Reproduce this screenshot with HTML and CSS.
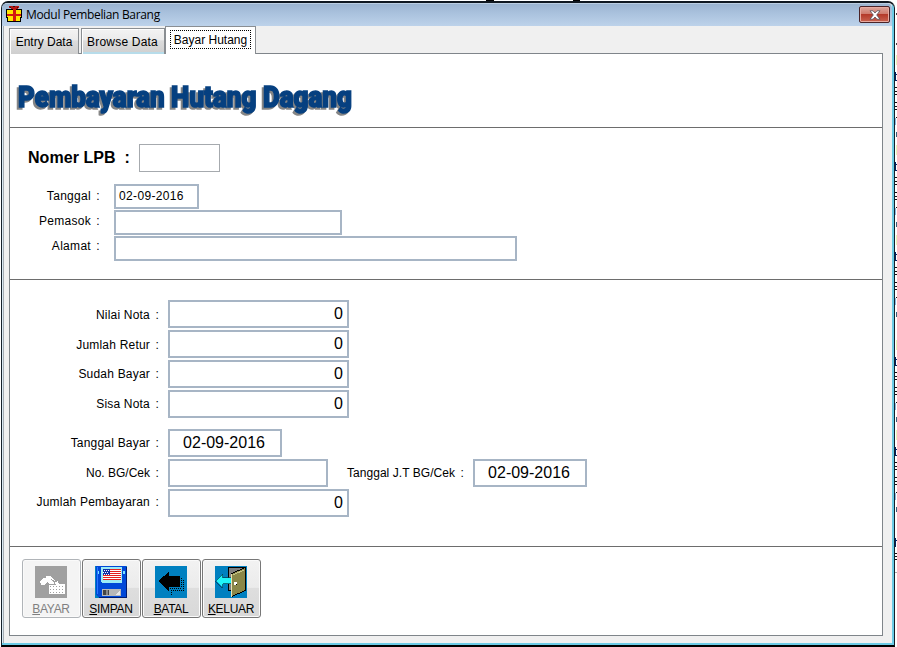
FILE: index.html
```html
<!DOCTYPE html>
<html lang="id">
<head>
<meta charset="utf-8">
<title>Modul Pembelian Barang</title>
<link rel="stylesheet" href="styles.css">
</head>
<body>
<div class="desktop">
  <svg class="behind" width="897" height="647" aria-hidden="true" shape-rendering="crispEdges">
    <defs>
      <g id="frag">
        <path d="M895 0h1v9h-1zM896 2h1v1h-1zM896 8h1v1h-1z" fill="#002060"/>
        <path d="M895 15h2v1h-2zM895 19h2v1h-2zM895 22h2v1h-2zM895 30h2v1h-2zM895 34h2v1h-2zM895 37h2v1h-2zM896 45h1v1h-1z" fill="#111"/>
        <path d="M895 46h1v7h-1z" fill="#8cb8dc"/>
        <path d="M896 60h1v5h-1z" fill="#35607a"/>
        <path d="M896 -17h1v10h-1z" fill="#e7f5b8"/>
      </g>
    </defs>
    <path d="M486 0h8v1h-8zM573 0h7v1h-7z" fill="#000"/>
    <path d="M896 13h1v2h-1zM896 43h1v2h-1z" fill="#444"/>
    <use href="#frag" y="72"/><use href="#frag" y="162"/><use href="#frag" y="252"/><use href="#frag" y="357"/><use href="#frag" y="447"/>
    <path d="M895 538h1v9h-1zM896 540h1v1h-1z" fill="#002060"/>
    <path d="M895 553h2v1h-2zM895 556h2v1h-2zM895 559h2v1h-2z" fill="#111"/>
    <path d="M895 572h2v1h-2z" fill="#aaa"/>
  </svg>
  <main class="window">
    <header class="titlebar">
      <svg class="app-icon" width="17" height="17" viewBox="0 0 17 17" shape-rendering="crispEdges">
        <path d="M3 0h10v2l-3 1H6L3 2z" fill="#b41414"/>
        <path d="M4 1h1v1H4zM7 0h2v1H7zM11 1h1v1h-1z" fill="#301010"/>
        <path d="M0 3h16v9h-1v4H1v-4H0z" fill="#000"/>
        <path d="M1 4h14v7H1zM2 11h12v4H2z" fill="#ffe600"/>
        <path d="M7 3h3v12H7zM1 8h14v2H1z" fill="#d21a10"/>
      </svg>
      <span class="caption">Modul Pembelian Barang</span>
      <button class="close" aria-label="Tutup"><svg width="12" height="10" viewBox="0 0 12 10"><path d="M1 .8h3L6 3l2-2.200h3L7.700 5 11 9.200H8L6 7 4 9.200H1L4.300 5z" fill="#fff" stroke="#54505a" stroke-width=".8"/></svg></button>
    </header>
    <nav class="tabs">
      <button class="tab t1"><span>Entry Data</span></button>
      <button class="tab t2"><span>Browse Data</span></button>
      <button class="tab active"><span>Bayar Hutang</span></button>
    </nav>
    <section class="pane">
      <div class="band heading">
        <svg width="345" height="40">
          <text class="big" x="2" y="27" textLength="334" lengthAdjust="spacingAndGlyphs">Pembayaran Hutang Dagang</text>
        </svg>
      </div>
      <div class="band supplier">
        <div class="lpb"><b>Nomer LPB&nbsp; :</b><i class="box plain"></i></div>
        <div class="row r1"><label>Tanggal</label><em>:</em><i class="box date">02-09-2016</i></div>
        <div class="row r1 mid"><label>Pemasok</label><em>:</em><i class="box name"></i></div>
        <div class="row r1 low"><label>Alamat</label><em>:</em><i class="box address"></i></div>
      </div>
      <div class="band payment">
        <div class="row r2 first"><label>Nilai Nota</label><em>:</em><i class="box num">0</i></div>
        <div class="row r2 first"><label>Jumlah Retur</label><em>:</em><i class="box num">0</i></div>
        <div class="row r2"><label>Sudah Bayar</label><em>:</em><i class="box num">0</i></div>
        <div class="row r2"><label>Sisa Nota</label><em>:</em><i class="box num">0</i></div>
        <div class="row r2 gap"><label>Tanggal Bayar</label><em>:</em><i class="box day">02-09-2016</i></div>
        <div class="row r2"><label class="tight">No. BG/Cek</label><em>:</em><i class="box cek"></i><label class="due">Tanggal J.T BG/Cek</label><em>:</em><i class="box day">02-09-2016</i></div>
        <div class="row r2 last"><label>Jumlah Pembayaran</label><em>:</em><i class="box num">0</i></div>
      </div>
      <div class="band actions">
        <button class="act off"><svg width="32" height="32" viewBox="0 0 32 32" shape-rendering="crispEdges">
          <path d="M0 0h32v32H0z" fill="#a0a0a0"/>
          <path d="M5 15l3-3 5-1 6 4v3h-4l-3-2-3 3H6zM10 10h5l3 2 2 3-4-2z" fill="#fff"/>
          <path d="M14 19h8v9h-8zM22 18h8v10h-8zM20 16l3-1 1 4h-3z" fill="#fff"/>
          <path d="M15 20.500h14M15 23.500h14M15 26.500h14" stroke="#a0a0a0" stroke-dasharray="1 2"/>
          <path d="M16 13l4 4" stroke="#a0a0a0"/></svg><span><u>B</u>AYAR</span></button>
        <button class="act"><svg width="32" height="32" viewBox="0 0 32 32" shape-rendering="crispEdges">
          <path d="M0 0h32v32H0z" fill="#0080c0"/>
          <path d="M1 0h30v32H4l-3-3z" fill="#0048d8"/><path d="M2 1h1v27H2z" fill="#2878ff"/><path d="M31 1h1v31H4v-1h27z" fill="#001c70"/>
          <path d="M6 1h21v15l-1 1H7l-1-1z" fill="#9cebf6"/><path d="M8 3h18v11H8z" fill="#fff"/>
          <path d="M8 3h18v1H8zM8 5h18v1H8zM8 7h18v1H8zM8 9h18v1H8zM8 11h18v1H8zM8 13h18v1H8z" fill="#e42020"/>
          <path d="M8 3h7v6H8z" fill="#1430a8"/><path d="M9 4.500h6M8 6.500h6M9 8.500h6" stroke="#fff" stroke-dasharray="1 1"/>
          <path d="M3 5h1v3H3zM28 5h2v3h-2z" fill="#7ce0ff"/>
          <path d="M7 23h19v7H7z" fill="#b8b8b8"/><path d="M8 24h6v5H8z" fill="#444"/><path d="M11 24h2v5h-2z" fill="#888"/><path d="M20 29l5-5v5z" fill="#e8e8e8"/>
          </svg><span><u>S</u>IMPAN</span></button>
        <button class="act"><svg width="32" height="32" viewBox="0 0 32 32" shape-rendering="crispEdges">
          <path d="M0 0h32v32H0z" fill="#0080c0"/><path d="M3 15l11-9v4h11v11H14v4z" fill="#000"/>
          <path d="M26.500 12v10M28.500 14v11M15 22.500h12M16 24.500h13M16.500 24v5" fill="none" stroke="#000" stroke-dasharray="1 1"/></svg><span><u>B</u>ATAL</span></button>
        <button class="act"><svg width="32" height="32" viewBox="0 0 32 32" shape-rendering="crispEdges">
          <path d="M0 0h32v32H0z" fill="#0080c0"/><path d="M13.500 1.500h17v23h-17z" fill="#808080" stroke="#000"/>
          <path d="M16.500 7.500l14-6v23l-14 6z" fill="#8a8748" stroke="#000"/><path d="M18 9l11-5" stroke="#c8c68c"/>
          <path d="M0.500 14.500l7-7v4h9v6h-9v4z" fill="#20f4f8" stroke="#003c50" stroke-width=".7"/>
          <path d="M16.500 7.500v23" stroke="#e6e6b4"/><path d="M19 16h3v3h-3z" fill="#fff"/><path d="M21 18h1v1h-1z" fill="#000"/>
          </svg><span><u>K</u>ELUAR</span></button>
      </div>
    </section>
  </main>
</div>
</body>
</html>
```
FILE: styles.css
```css
* { box-sizing: border-box; }
body { margin: 0; overflow: hidden; background: #fff; font-family: "Liberation Sans", Arial, sans-serif; color: #000; }
button { padding: 0; font: inherit; color: inherit; }
i, em { font-style: normal; }
.desktop { position: relative; width: 897px; height: 647px; padding: 1px 0 0 1px; }
.behind { position: absolute; left: 0; top: 0; }
.window {
  position: relative; width: 894px; height: 646px; padding: 0 7px 0 6px;
  background: #f0f0f0; border: 1px solid #14202a; border-top: 2px solid #101820;
  border-bottom: 2px solid #000; border-radius: 7px 7px 0 0;
  box-shadow: inset -2px -2px 0 #6ccbe6, inset 1px 0 0 #dcebf5, inset 2px 0 0 #a5adb3;
}
.titlebar {
  display: flex; align-items: flex-start; height: 23px; margin: 0 -5px 0 -6px;
  background: linear-gradient(#dce8f3 0, #9bb4d0 1px, #a8c0dc 9px, #bdd2ea 100%);
  border-radius: 5px 5px 0 0;
}
.app-icon { margin: 3px 3px 0 4px; flex: none; }
.caption { flex: 1; padding-top: 4px; font: 12px/16px "Open Sans", "Noto Sans", sans-serif; letter-spacing: -.33px; }
.close {
  display: flex; align-items: center; justify-content: center; width: 31px; height: 17px; margin: 3px 2px 0 0;
  border: 1px solid #4a2428; border-radius: 2px; box-shadow: inset 0 0 0 1px #e8aaa0;
  background: linear-gradient(#dda69c 0, #cf7b6d 45%, #b43a2a 50%, #c96350 100%);
}
.tabs { display: flex; height: 27px; }
.tab {
  height: 26px; margin-top: 2px; border: 1px solid #8a8e92; border-bottom: 0; font-size: 12px;
  background: linear-gradient(#f3f3f3 0, #ebebeb 42%, #dcdcdc 48%, #cfcfcf 100%);
  box-shadow: inset 1px 1px 0 #fff;
}
.t1 { width: 70px; margin-left: 1px; }
.t2 { width: 84px; margin-left: 2px; padding-right: 1px; letter-spacing: .2px; box-shadow: inset 1px 1px 0 #fff, inset 0 -2px 0 #b7dcea; }
.tab.active {
  position: relative; width: 91px; height: 28px; margin-top: 0; background: #fff; box-shadow: none;
  display: flex; align-items: flex-start; padding: 3px 0 0 4px;
}
.active span { width: 81px; height: 19px; border: 1px dotted #000; line-height: 19px; }
.pane { width: 874px; height: 583px; margin-left: 1px; border: 1px solid #7f858a; background: #fff; }
.band { border-bottom: 1px solid #6d6d6d; width: 872px; }
.heading { height: 74px; padding: 26px 0 0 6px; }
.big {
  font: 900 29px Roboto, "Open Sans", sans-serif; fill: #064080; stroke: #064080; stroke-width: 1.5px;
  filter: drop-shadow(-1.500px 2px 0 #858585);
}
.supplier { height: 152px; padding-top: 16px; }
.lpb { display: flex; height: 40px; padding-left: 18px; }
.lpb b { width: 111px; font-size: 16px; line-height: 27px; letter-spacing: .05px; }
.box {
  display: block; height: 28px; border: 2px solid; border-color: #a7b5c5; background: #fff;
  font-size: 16px; line-height: 24px;
}
.plain { width: 81px; border: 1px solid #a6aaae; }
.row { display: flex; font-size: 12px; letter-spacing: .3px; }
.row label { text-align: right; }
.row em { width: 9px; text-align: right; }
.r1 { height: 26px; }
.r1 label { width: 81px; line-height: 24px; }
.r1 em { line-height: 24px; }
.mid label, .mid em { line-height: 22px; }
.low label, .low em { line-height: 20px; }
.r1 .box { height: 25px; margin-left: 14px; font-size: 12px; line-height: 21px; letter-spacing: .35px; }
.r1 .date { width: 85px; padding-left: 3px; }
.r1 .name { width: 228px; }
.r1 .address { width: 403px; }
.payment { height: 267px; padding-top: 20px; }
.r2 { height: 30px; letter-spacing: .2px; }
.r2 label { width: 140px; line-height: 28px; }
.r2 em { line-height: 28px; }
.first label, .first em { line-height: 30px; }
.last label, .last em { line-height: 26px; }
.r2 .tight { letter-spacing: 0; }
.r2 .box { margin-left: 9px; letter-spacing: 0; }
.r2.gap { margin-top: 9px; }
.num { width: 181px; padding-right: 4px; text-align: right; }
.r2 .day { width: 114px; padding-right: 2px; text-align: center; }
.cek { width: 160px; }
.r2 .due { width: 127px; letter-spacing: .05px; }
.actions { display: flex; gap: 1px; height: 88px; padding: 12px 0 0 12px; border: 0; }
.act {
  display: flex; flex-direction: column; align-items: center; width: 59px; height: 59px; padding: 6px 1px 0 0;
  border: 1px solid #777; border-radius: 3px; font-size: 12px; box-shadow: inset 0 0 0 1px #fafafa;
  background: linear-gradient(#f2f2f2 0, #ebebeb 48%, #dedede 50%, #d8d8d8 100%);
}
.act span { margin-top: 4px; line-height: 15px; letter-spacing: -.3px; }
.off { color: #808080; border-color: #b0b4b8; background: #f4f4f4; }
```
